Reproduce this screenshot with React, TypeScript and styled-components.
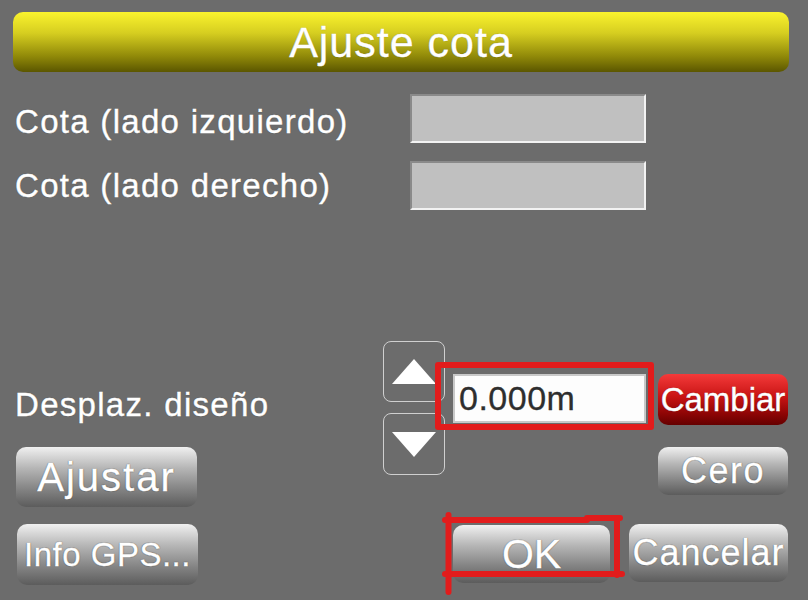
import React from "react";
import styled, { createGlobalStyle } from "styled-components";

const GlobalStyle = createGlobalStyle`
  html, body {
    margin: 0;
    padding: 0;
    background: #6c6c6c;
  }
  body {
    font-family: "Liberation Sans", Arial, sans-serif;
  }
`;

const Page = styled.div`
  width: 808px;
  height: 600px;
  background: #6c6c6c;
  display: flex;
  flex-direction: column;
  overflow: hidden;
  color: #fff;
`;

const TitleBar = styled.div`
  margin: 12px 19px 0 13px;
  height: 60px;
  border-radius: 10px;
  background: linear-gradient(to bottom, #faf32e 0%, #d6ce20 35%, #8e8708 75%, #5b5600 100%);
  display: flex;
  align-items: center;
  justify-content: center;
  font-size: 43px;
  letter-spacing: 1px;
  -webkit-text-stroke: 0.4px #fff;
  text-shadow: 0 0 1px rgba(0, 0, 0, 0.6);
`;

const Fields = styled.div`
  display: flex;
  flex-direction: column;
  gap: 18px;
  margin-top: 22px;
  padding-left: 15px;
`;

const FieldRow = styled.div`
  display: flex;
  align-items: center;
  height: 49px;
`;

const Label = styled.span<{ $shift?: number }>`
  width: 395px;
  font-size: 33px;
  letter-spacing: 1.3px;
  line-height: 32px;
  white-space: nowrap;
  -webkit-text-stroke: 0.4px #fff;
  text-shadow: 0 0 1px rgba(0, 0, 0, 0.5);
  margin-top: ${(p) => p.$shift ?? 0}px;
`;

const ReadBox = styled.div`
  width: 236px;
  height: 49px;
  box-sizing: border-box;
  background: #c0c0c0;
  border-style: solid;
  border-width: 2px;
  border-color: #8a8a8a #f2f2f2 #f2f2f2 #8a8a8a;
`;

const Lower = styled.div`
  display: grid;
  margin-top: 131px;
  padding-left: 15px;
  grid-template-columns: 368px 62px 8px 193px 12px 130px;
  grid-template-rows: 106px 60px;
`;

const OffsetLabel = styled(Label)`
  grid-column: 1;
  grid-row: 1;
  align-self: start;
  margin-top: 48px;
`;

const Stepper = styled.div`
  grid-column: 2;
  grid-row: 1 / span 2;
  align-self: start;
  display: flex;
  flex-direction: column;
  gap: 11px;
`;

const StepButton = styled.div<{ $h: number }>`
  height: ${(p) => p.$h}px;
  box-sizing: border-box;
  border: 1px solid #cfcfcf;
  border-radius: 8px;
  display: flex;
  align-items: center;
  justify-content: center;
`;

const ValueBox = styled.div`
  grid-column: 4;
  grid-row: 1;
  align-self: start;
  margin-top: 33px;
  height: 49px;
  box-sizing: border-box;
  position: relative;
  background: #fdfdfd;
  border: 2px solid #c9c9c9;
  display: flex;
  align-items: center;
  padding-left: 4px;
  font-size: 34px;
  letter-spacing: 0.5px;
  color: #2e2e2e;
  -webkit-text-stroke: 0.3px #2e2e2e;
`;

const Marker = styled.div`
  position: absolute;
  left: -20px;
  top: -14px;
  right: -10px;
  bottom: -9px;
  border: 6px solid #e21c1c;
  border-radius: 3px;
  pointer-events: none;
`;

const RedButton = styled.div`
  grid-column: 6;
  grid-row: 1;
  align-self: start;
  margin-top: 33px;
  height: 51px;
  border-radius: 10px;
  background: linear-gradient(to bottom, #f43a3a 0%, #c81414 45%, #8a0404 80%, #650000 100%);
  display: flex;
  align-items: center;
  justify-content: center;
  font-size: 33px;
  white-space: nowrap;
  -webkit-text-stroke: 0.4px #fff;
  text-shadow: 0 0 1px rgba(0, 0, 0, 0.6);
`;

const GrayButton = styled.div<{ $w?: number; $h: number; $size: number; $track?: number }>`
  width: ${(p) => (p.$w ? `${p.$w}px` : "auto")};
  height: ${(p) => p.$h}px;
  box-sizing: border-box;
  border-radius: 10px;
  background: linear-gradient(to bottom, #f0f0f0 0%, #b6b6b6 35%, #848484 70%, #5c5c5c 100%);
  display: flex;
  align-items: center;
  justify-content: center;
  font-size: ${(p) => p.$size}px;
  letter-spacing: ${(p) => p.$track ?? 0}px;
  white-space: nowrap;
  -webkit-text-stroke: 0.4px #fff;
  text-shadow: 0 0 1px #3a3a3a, 0 0 1px #3a3a3a;
`;

const AdjustButton = styled(GrayButton)`
  grid-column: 1;
  grid-row: 2;
  margin-left: 1px;
`;

const ZeroButton = styled(GrayButton)`
  grid-column: 6;
  grid-row: 2;
`;

const BottomRow = styled.div`
  display: flex;
  align-items: flex-start;
  gap: 19px;
  margin-top: 17px;
  padding: 0 20px 0 17px;
`;

const OkSlot = styled.div`
  position: relative;
  margin-left: auto;
  margin-top: 1px;
`;

const Scribble = styled.svg`
  position: absolute;
  left: -13px;
  top: -15px;
  pointer-events: none;
  overflow: visible;
`;

const Arrow = ({ down }: { down?: boolean }) => (
  <svg width="44" height="25" viewBox="0 0 44 25">
    <polygon points={down ? "0,0 44,0 22,25" : "22,0 44,25 0,25"} fill="#fff" />
  </svg>
);

export default function App() {
  return (
    <>
      <GlobalStyle />
      <Page>
        <TitleBar>Ajuste cota</TitleBar>

        <Fields>
          <FieldRow>
            <Label $shift={6}>Cota (lado izquierdo)</Label>
            <ReadBox />
          </FieldRow>
          <FieldRow>
            <Label>Cota (lado derecho)</Label>
            <ReadBox />
          </FieldRow>
        </Fields>

        <Lower>
          <OffsetLabel>Desplaz. diseño</OffsetLabel>
          <Stepper>
            <StepButton $h={61}>
              <Arrow />
            </StepButton>
            <StepButton $h={62}>
              <Arrow down />
            </StepButton>
          </Stepper>
          <ValueBox>
            0.000m
            <Marker />
          </ValueBox>
          <RedButton>Cambiar</RedButton>
          <AdjustButton $w={181} $h={60} $size={40} $track={2}>
            Ajustar
          </AdjustButton>
          <ZeroButton $h={48} $size={36} $track={1.5}>
            Cero
          </ZeroButton>
        </Lower>

        <BottomRow>
          <GrayButton $w={181} $h={61} $size={33} $track={0.5}>
            Info GPS...
          </GrayButton>
          <OkSlot>
            <GrayButton $w={157} $h={58} $size={41}>
              OK
            </GrayButton>
            <Scribble width="186" height="90" viewBox="0 0 186 90">
              <path
                d="M8.5 5 L8.5 82 M5 10 L147 10 L147 8 L180 8 M177 8 L177 65 M5 64 L182 64"
                fill="none"
                stroke="#e21c1c"
                strokeWidth="6"
                strokeLinecap="round"
                strokeLinejoin="round"
              />
            </Scribble>
          </OkSlot>
          <GrayButton $w={159} $h={58} $size={36} $track={1}>
            Cancelar
          </GrayButton>
        </BottomRow>
      </Page>
    </>
  );
}
